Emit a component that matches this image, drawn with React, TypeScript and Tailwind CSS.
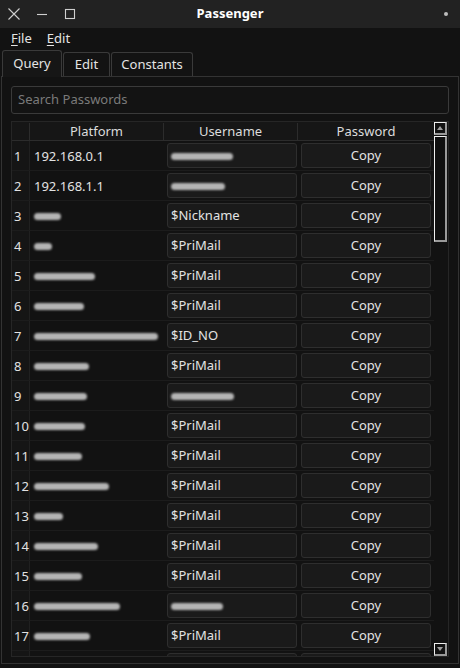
import React from 'react';

type Row = { p?: string; pw?: number; u?: string; uw?: number; empty?: boolean };

const rows: Row[] = [
  { p: '192.168.0.1', uw: 62 },
  { p: '192.168.1.1', uw: 54 },
  { pw: 27, u: '$Nickname' },
  { pw: 18, u: '$PriMail' },
  { pw: 61, u: '$PriMail' },
  { pw: 50, u: '$PriMail' },
  { pw: 124, u: '$ID_NO' },
  { pw: 55, u: '$PriMail' },
  { pw: 53, uw: 63 },
  { pw: 51, u: '$PriMail' },
  { pw: 48, u: '$PriMail' },
  { pw: 75, u: '$PriMail' },
  { pw: 29, u: '$PriMail' },
  { pw: 64, u: '$PriMail' },
  { pw: 48, u: '$PriMail' },
  { pw: 86, uw: 52 },
  { pw: 56, u: '$PriMail' },
  { empty: true },
];

function Smudge({ w }: { w: number }) {
  return (
    <span
      className="block h-[7px] rounded-full bg-[#b4b4b4] blur-[1.2px]"
      style={{ width: w }}
    />
  );
}

function TitleBar() {
  return (
    <div className="flex h-[28px] shrink-0 items-center bg-[#222222]">
      <div className="flex w-[100px] items-center gap-[16px] pl-[8px] text-[#cfcfcf]">
        <svg width="12" height="12" viewBox="0 0 12 12" fill="none" stroke="currentColor" strokeWidth="1.1">
          <path d="M0.5 0.5 L11.5 11.5 M11.5 0.5 L0.5 11.5" />
        </svg>
        <svg width="12" height="12" viewBox="0 0 12 12" fill="none" stroke="currentColor" strokeWidth="1.1">
          <path d="M1 6.5 H11" />
        </svg>
        <svg width="12" height="12" viewBox="0 0 12 12" fill="none" stroke="currentColor" strokeWidth="1.1">
          <rect x="1.5" y="1.5" width="9" height="9" />
        </svg>
      </div>
      <div className="flex-1 text-center text-[13px] font-bold text-white">Passenger</div>
      <div className="flex w-[100px] justify-end pr-[12px]">
        <span className="block h-[4px] w-[4px] rounded-full bg-[#bdbdbd]" />
      </div>
    </div>
  );
}

function MenuBar() {
  return (
    <div className="flex h-[22px] shrink-0 items-center gap-[15px] pl-[11px] text-[13px] text-[#e4e4e4]">
      <span>
        <span className="underline underline-offset-2">F</span>ile
      </span>
      <span>
        <span className="underline underline-offset-2">E</span>dit
      </span>
    </div>
  );
}

function Tabs() {
  return (
    <div className="flex h-[26px] shrink-0 items-end gap-[1px] pl-[2px] text-[13px] text-[#e4e4e4]">
      <div className="relative z-10 -mb-px flex h-[27px] w-[60px] items-center justify-center rounded-t-[3px] border border-b-0 border-[#3a3a3a] bg-[#161616]">
        Query
      </div>
      <div className="flex h-[24px] w-[47px] items-center justify-center rounded-t-[3px] border border-b-0 border-[#3a3a3a] bg-[#131313] pt-[1px]">
        Edit
      </div>
      <div className="flex h-[24px] w-[82px] items-center justify-center rounded-t-[3px] border border-b-0 border-[#3a3a3a] bg-[#131313] pt-[1px]">
        Constants
      </div>
    </div>
  );
}

function ArrowBox({ up }: { up?: boolean }) {
  return (
    <div className="flex h-[13px] w-[13px] items-center justify-center border-t border-l border-t-[#f0f0f0] border-l-[#f0f0f0] border-r-2 border-b-2 border-r-[#9a9a9a] border-b-[#9a9a9a] bg-[#121212]">
      <svg width="6" height="4" viewBox="0 0 6 4" fill="#a0a0a0">
        {up ? <path d="M0 4 L3 0 L6 4 Z" /> : <path d="M0 0 L6 0 L3 4 Z" />}
      </svg>
    </div>
  );
}

function Scrollbar() {
  return (
    <div className="flex w-[14px] shrink-0 flex-col items-start bg-[#121212]">
      <ArrowBox up />
      <div className="mt-px h-[106px] w-[13px] border-t border-l border-t-[#f0f0f0] border-l-[#f0f0f0] border-r-2 border-b-2 border-r-[#9a9a9a] border-b-[#9a9a9a] bg-[#101010]" />
      <div className="flex-1" />
      <ArrowBox />
    </div>
  );
}

function Table() {
  return (
    <div className="mt-[7px] flex h-[536px] w-[438px] overflow-hidden border border-[#262626] bg-[#121212]">
      <div className="flex w-[422px] flex-col">
        <div className="flex h-[19px] shrink-0 border-b border-[#2c2c2c] bg-[#161616] pt-[1px] text-[13px] text-[#dcdcdc]">
          <div className="w-[18px] border-r border-[#2c2c2c]" />
          <div className="flex w-[134px] items-center justify-center border-r border-[#2c2c2c]">Platform</div>
          <div className="flex w-[134px] items-center justify-center border-r border-[#2c2c2c]">Username</div>
          <div className="flex w-[136px] items-center justify-center">Password</div>
        </div>
        {rows.map((r, i) => (
          <div key={i} className="flex h-[30px] shrink-0 border-b border-[#1c1c1c] text-[13px] text-[#e2e2e2]">
            <div className="flex w-[18px] items-center border-r border-[#202020] bg-[#151515] pl-[2px] pt-[3px]">
              {r.empty ? '' : i + 1}
            </div>
            <div className="flex w-[134px] items-center pl-[4px] pt-[2px]">
              {r.empty ? null : r.p ? <span>{r.p}</span> : <Smudge w={r.pw ?? 40} />}
            </div>
            <div className="flex w-[134px] pl-[3px] pr-[1px] py-[2px]">
              <div className="flex flex-1 items-center rounded-[3px] border border-[#2e2e2e] bg-[#1a1a1a] pl-[3px] pt-[1px]">
                {r.empty ? null : r.u ? <span>{r.u}</span> : <Smudge w={r.uw ?? 50} />}
              </div>
            </div>
            <div className="flex w-[136px] px-[3px] py-[2px]">
              <div className="flex flex-1 items-center justify-center rounded-[3px] border border-[#2e2e2e] bg-[#1a1a1a] pt-[1px]">
                {r.empty ? '' : 'Copy'}
              </div>
            </div>
          </div>
        ))}
      </div>
      <Scrollbar />
    </div>
  );
}

export default function App() {
  return (
    <div
      className="flex h-[668px] w-[460px] flex-col overflow-hidden bg-[#121212]"
      style={{ fontFamily: '"Noto Sans", "Open Sans", sans-serif' }}
    >
      <TitleBar />
      <MenuBar />
      <Tabs />
      <div className="mb-[4px] ml-[1px] mr-[1px] flex flex-1 flex-col border border-[#333333] px-[9px] pt-[9px]">
        <div className="flex h-[28px] shrink-0 items-center rounded-[3px] border border-[#3a3a3a] bg-[#131313] pl-[6px] text-[13px] text-[#7a7a7a]">
          Search Passwords
        </div>
        <Table />
      </div>
    </div>
  );
}
